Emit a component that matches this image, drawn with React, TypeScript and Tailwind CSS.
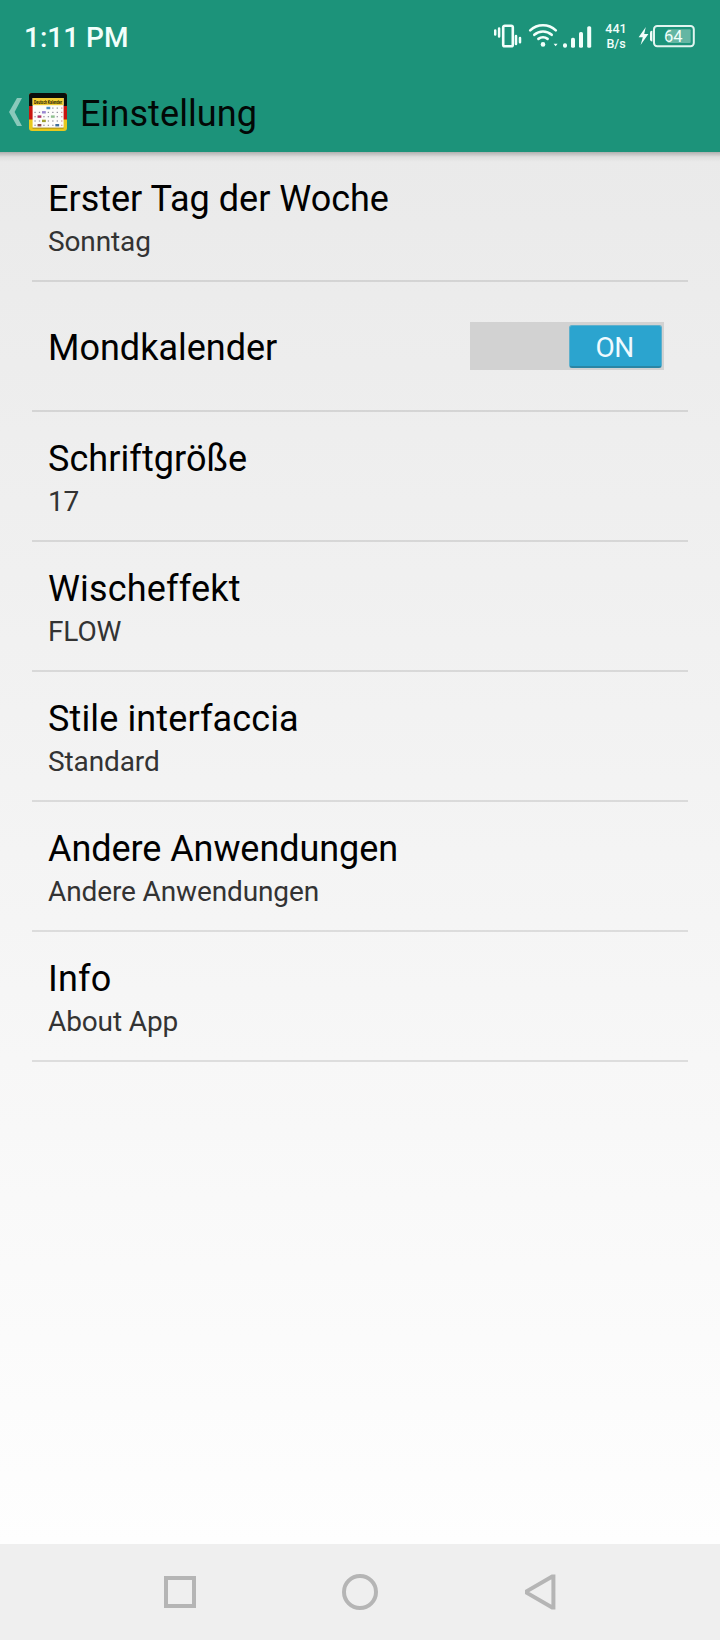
import { useState } from "react";

type Setting = {
  title: string;
  value?: string;
  tracking?: string;
};

const settings: Setting[] = [
  { title: "Erster Tag der Woche", value: "Sonntag" },
  { title: "Mondkalender" },
  { title: "Schriftgröße", value: "17", tracking: "tracking-[0.06px]" },
  { title: "Wischeffekt", value: "FLOW", tracking: "tracking-[0.18px]" },
  { title: "Stile interfaccia", value: "Standard", tracking: "tracking-[0.12px]" },
  { title: "Andere Anwendungen", value: "Andere Anwendungen", tracking: "tracking-[-0.07px]" },
  { title: "Info", value: "About App", tracking: "tracking-[0.2px]" },
];

function VibrateIcon() {
  return (
    <svg width="28" height="24" viewBox="0 0 28 24" fill="none" stroke="#f2fffb">
      <rect x="9.2" y="1.7" width="9.6" height="20.6" rx="1.6" strokeWidth="2.6" />
      <path d="M1.2 6.4v4.2M5.1 4.4v8.2M22 12v8M26 14v4.2" strokeWidth="2.5" strokeLinecap="round" />
    </svg>
  );
}

function SignalIcons() {
  return (
    <svg width="64" height="26" viewBox="0 0 64 26" fill="#f2fffb">
      <g fill="none" stroke="#f2fffb" strokeWidth="2.6" strokeLinecap="round">
        <path d="M2.2 7.4C9.4 .6 20.6 .6 27.8 7.4" />
        <path d="M6.3 11.8c5-4.4 12.4-4.4 17.4 0" />
        <path d="M10.4 15.9c2.7-2.1 6.5-2.1 9.2 0" />
      </g>
      <circle cx="15" cy="21.4" r="2.3" />
      <path d="M25.6 20.8h4l-2 2.4z" />
      <rect x="35" y="20.2" width="4" height="4.6" rx="1.8" />
      <rect x="43" y="14.8" width="4" height="10" rx="1.6" />
      <rect x="51" y="9" width="4" height="15.8" rx="1.6" />
      <rect x="59.2" y="3.2" width="4" height="21.6" rx="1.6" />
    </svg>
  );
}

function BatteryIcon() {
  return (
    <svg width="58" height="24" viewBox="0 0 58 24">
      <path d="M8.8 3 1.6 13.2h4.2L3.6 21 11.4 10H7.2z" fill="#f2fffb" />
      <path d="M15.4 6.8h-.6a1.8 1.8 0 0 0-1.8 1.8v7a1.8 1.8 0 0 0 1.8 1.8h.6z" fill="#f2fffb" />
      <rect x="17" y="2" width="39.8" height="20.2" rx="3.2" fill="none" stroke="#e2f5f0" strokeWidth="2" />
      <rect x="30.5" y="5.2" width="23.2" height="13.8" rx="1" fill="#64b6a3" />
      <text x="27" y="18.2" fill="#f2fffb" fontSize="16.5" fontFamily="Roboto, sans-serif" textLength="18.5">
        64
      </text>
    </svg>
  );
}

function StatusBar() {
  return (
    <div className="flex h-[72px] items-start pl-6 pr-[25px] text-[#f2fffb]">
      <span className="mt-[21px] text-[28px] leading-[33px] font-medium">1:11 PM</span>
      <div className="ml-auto flex items-start">
        <div className="mt-6 mr-[6px]">
          <VibrateIcon />
        </div>
        <div className="mt-[23px]">
          <SignalIcons />
        </div>
        <div className="mt-[21px] ml-[13px] w-[22px] text-center text-[12.5px] leading-[15px] font-medium">
          <div>441</div>
          <div>B/s</div>
        </div>
        <div className="mt-6 ml-[10px]">
          <BatteryIcon />
        </div>
      </div>
    </div>
  );
}

// 7-column day grid, the coloured cells are the marked days
const marked: Record<number, string> = {
  3: "#4a90c4",
  9: "#9a86d0",
  15: "#b0305f",
  18: "#8fc08f",
  23: "#a0a030",
  29: "#8a4a4a",
  33: "#3f6f9a",
};

function AppIcon() {
  const days = Array.from({ length: 35 }, (_, i) => i).filter((i) => i > 2);
  return (
    <svg width="38" height="38" viewBox="0 0 38 38" className="overflow-visible">
      <defs>
        <clipPath id="tile">
          <rect width="38" height="38" rx="3" />
        </clipPath>
      </defs>
      <g clipPath="url(#tile)">
        <rect width="38" height="38" fill="#e9c81d" />
        <rect width="38" height="26.5" fill="#c9150e" />
        <rect width="38" height="13" fill="#0a0f0b" />
        <rect x="3.6" y="34" width="31" height="1.6" fill="#a88b12" />
      </g>
      <rect x="3.6" y="5" width="31" height="29.6" fill="#fcfcfa" />
      <rect x="3.6" y="5" width="31" height="7.2" fill="#f2cf35" />
      <text x="5" y="10.6" fontSize="4.8" fontWeight="700" fontFamily="Roboto, sans-serif" textLength="28" lengthAdjust="spacingAndGlyphs" fill="#1c1800">
        Deutsch Kalender
      </text>
      {days.map((i) => {
        const x = 5.4 + (i % 7) * 4.45;
        const y = 15 + Math.floor(i / 7) * 4.3;
        return marked[i] ? (
          <rect key={i} x={x - 1.3} y={y - 1.2} width="3.8" height="2.4" fill={marked[i]} />
        ) : (
          <rect key={i} x={x} y={y - 0.5} width="1.3" height="1.2" fill={i % 7 === 6 ? "#d98a8a" : "#8d8d98"} />
        );
      })}
    </svg>
  );
}

function ActionBar() {
  return (
    <div className="flex h-20 items-center pl-[9px]">
      <svg width="14" height="28" viewBox="0 0 14 28" className="mr-[6px]">
        <path d="M8 0h5L5.6 14 13 28H8L0 14z" fill="#8ac9bb" />
      </svg>
      <AppIcon />
      <h1 className="mt-[3px] ml-[13px] text-[36px] leading-[42px] tracking-[0.1px] text-[#020806]">Einstellung</h1>
    </div>
  );
}

function Toggle({ on, onChange }: { on: boolean; onChange: () => void }) {
  return (
    <button
      role="switch"
      aria-checked={on}
      onClick={onChange}
      className={`flex h-12 w-[194px] items-center bg-[#d2d2d2] px-[2px] ${on ? "justify-end" : "justify-start"}`}
    >
      <span className="flex h-[43px] w-[93px] items-center justify-center rounded-[3px] border border-b-2 border-[#5fb0cc] border-b-[#2b86a5] bg-[#2ba4cf] pt-[3px] pr-[2px] text-[28px] leading-[33px] tracking-[-0.5px] text-[#effaff]">
        {on ? "ON" : "OFF"}
      </span>
    </button>
  );
}

function NavBar() {
  return (
    <nav className="flex h-24 items-center justify-center gap-[144px] bg-[#efefef]">
      <svg width="36" height="36" viewBox="0 0 36 36" fill="none" stroke="#b5b5b5" strokeWidth="4">
        <rect x="4" y="4" width="28" height="28" />
      </svg>
      <svg width="36" height="36" viewBox="0 0 36 36" fill="none" stroke="#b5b5b5" strokeWidth="4">
        <circle cx="18" cy="18" r="16" />
      </svg>
      <svg width="36" height="36" viewBox="0 0 36 36" fill="none" stroke="#b5b5b5" strokeWidth="4">
        <path d="M31.4 2.4v31.2h-1.2L5 18.9v-1.8L30.2 2.4z" />
      </svg>
    </nav>
  );
}

export default function App() {
  const [moon, setMoon] = useState(true);

  return (
    <div className="flex h-[1640px] w-[720px] flex-col bg-white font-[Roboto,sans-serif]">
      <header className="h-[152px] bg-[#1c937a]">
        <StatusBar />
        <ActionBar />
      </header>
      <main className="relative flex-1 bg-linear-to-b from-[#eaeaea] to-[#fefefe]">
        <div className="absolute inset-x-0 top-0 h-[10px] bg-linear-to-b from-black/25 via-black/5 to-transparent" />
        <ul className="px-8">
          {settings.map((s) => (
            <li key={s.title} className="h-[130px] border-b-2 border-black/10 px-4">
              {s.value ? (
                <div className="pt-[26px]">
                  <p className={`text-[36px] leading-[42px] text-black ${s.tracking ?? ""}`}>{s.title}</p>
                  <p className="mt-[5px] text-[28px] leading-[33px] tracking-[-0.12px] text-[#333333]">{s.value}</p>
                </div>
              ) : (
                <div className="flex h-full items-center justify-between pr-2">
                  <p className="mt-1 text-[36px] leading-[42px] text-black">{s.title}</p>
                  <Toggle on={moon} onChange={() => setMoon(!moon)} />
                </div>
              )}
            </li>
          ))}
        </ul>
      </main>
      <NavBar />
    </div>
  );
}
